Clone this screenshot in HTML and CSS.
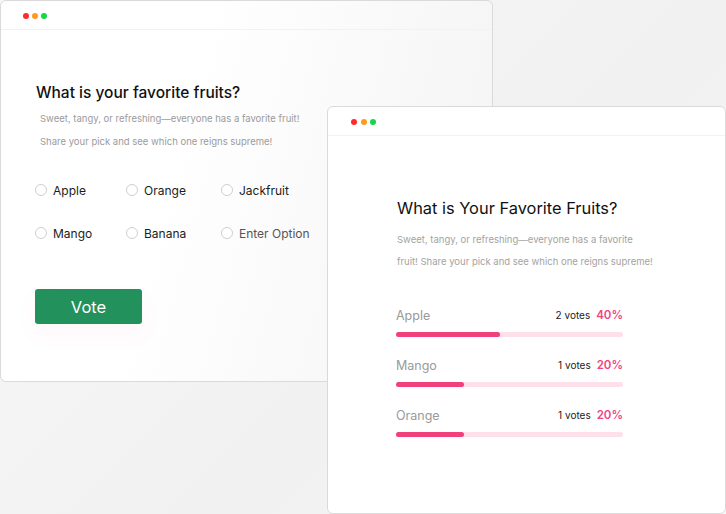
FILE: index.html
```html
<!DOCTYPE html>
<html lang="en">
<head>
    <meta charset="UTF-8">
    <meta name="viewport" content="width=device-width, initial-scale=1.0">
    <title>Fruit Poll</title>
    <link rel="stylesheet" href="styles.css">
</head>
<body>
    <div class="stage">
        <!-- Voting window -->
        <div class="window poll-window">
            <div class="window-bar">
                <span class="dot red"></span>
                <span class="dot orange"></span>
                <span class="dot green"></span>
            </div>
            <div class="poll-body">
                <h2 class="poll-title">What is your favorite fruits?</h2>
                <p class="poll-desc">Sweet, tangy, or refreshing—everyone has a favorite fruit!<br>Share your pick and see which one reigns supreme!</p>
                <div class="options">
                    <label class="option"><span class="radio"></span>Apple</label>
                    <label class="option"><span class="radio"></span>Orange</label>
                    <label class="option"><span class="radio"></span>Jackfruit</label>
                    <label class="option"><span class="radio"></span>Mango</label>
                    <label class="option"><span class="radio"></span>Banana</label>
                    <label class="option muted"><span class="radio"></span>Enter Option</label>
                </div>
                <button class="btn-vote">Vote</button>
            </div>
        </div>

        <!-- Results window -->
        <div class="window result-window">
            <div class="window-bar">
                <span class="dot red"></span>
                <span class="dot orange"></span>
                <span class="dot green"></span>
            </div>
            <div class="result-body">
                <h2 class="result-title">What is Your Favorite Fruits?</h2>
                <p class="result-desc">Sweet, tangy, or refreshing—everyone has a favorite<br>fruit! Share your pick and see which one reigns supreme!</p>
                <div class="results">
                    <div class="result">
                        <div class="result-head">
                            <span class="result-name">Apple</span>
                            <span class="votes">2 votes</span>
                            <span class="percent">40%</span>
                        </div>
                        <div class="track"><div class="fill" style="width: 46%"></div></div>
                    </div>
                    <div class="result">
                        <div class="result-head">
                            <span class="result-name">Mango</span>
                            <span class="votes">1 votes</span>
                            <span class="percent">20%</span>
                        </div>
                        <div class="track"><div class="fill" style="width: 30%"></div></div>
                    </div>
                    <div class="result">
                        <div class="result-head">
                            <span class="result-name">Orange</span>
                            <span class="votes">1 votes</span>
                            <span class="percent">20%</span>
                        </div>
                        <div class="track"><div class="fill" style="width: 30%"></div></div>
                    </div>
                </div>
            </div>
        </div>
    </div>
</body>
</html>
```

FILE: styles.css
```css
*{
    box-sizing: border-box;
}
body{
    margin: 0;
    width: 726px;
    height: 514px;
    overflow: hidden;
    font-family: Inter, "Liberation Sans", sans-serif;
    background: linear-gradient(135deg, #f7f7f7 0%, #f1f1f1 60%, #f7f7f7 100%);
}
.stage{
    position: relative;
    width: 726px;
    height: 514px;
}
.window{
    border: 1px solid #dadada;
    border-radius: 6px;
    background-color: #fff;
}
.window-bar{
    display: flex;
    align-items: center;
    gap: 3px;
    height: 29px;
    border-bottom: 1px solid #f2f2f2;
}
.dot{
    width: 6px;
    height: 6px;
    border-radius: 50%;
}
.red{ background-color: #ff2a2a; }
.orange{ background-color: #ff9a1f; }
.green{ background-color: #16d64a; }

/* left window */
.poll-window{
    width: 493px;
    height: 382px;
    background: linear-gradient(105deg, #ffffff 35%, #f3f3f3 100%);
}
.poll-window .window-bar{
    padding: 2px 0 0 22px;
}
.poll-body{
    padding: 53px 0 0 34px;
}
.poll-title{
    margin: 0 0 0 1px;
    font-size: 15.5px;
    line-height: 20px;
    font-weight: 500;
    color: #111;
}
.poll-desc{
    margin: 4px 0 0 5px;
    font-size: 9.5px;
    line-height: 23px;
    color: #9b9b9b;
}
.options{
    display: grid;
    grid-template-columns: 91px 95px auto;
    row-gap: 23px;
    margin-top: 27px;
}
.option{
    display: flex;
    align-items: center;
    gap: 6px;
    height: 20px;
    font-size: 12px;
    color: #1c1c1c;
}
.option.muted{
    color: #555;
}
.radio{
    width: 12px;
    height: 12px;
    border: 1px solid #cfcfcf;
    border-radius: 50%;
    background-color: #fff;
}
.btn-vote{
    display: block;
    margin-top: 46px;
    width: 107px;
    height: 35px;
    border: none;
    border-radius: 3px;
    background-color: #23915b;
    color: #fff;
    font-family: Inter, "Liberation Sans", sans-serif;
    font-size: 16.5px;
    box-shadow: 0 10px 22px rgba(240, 69, 127, 0.05);
}

/* right window, lies over the left one */
.result-window{
    position: absolute;
    left: 327px;
    top: 106px;
    width: 399px;
    height: 408px;
}
.result-window .window-bar{
    padding: 1px 0 0 23px;
    gap: 3.5px;
}
.result-body{
    padding: 61px 0 0 68px;
}
.result-title{
    margin: 0 0 0 1px;
    font-size: 16.4px;
    line-height: 22px;
    font-weight: 400;
    color: #111;
}
.result-desc{
    margin: 10px 0 0 1px;
    white-space: nowrap;
    font-size: 9.5px;
    line-height: 22px;
    color: #a3a3a3;
}
.results{
    display: flex;
    flex-direction: column;
    gap: 19px;
    margin-top: 33px;
    width: 227px;
}
.result-head{
    display: flex;
    align-items: center;
    height: 18px;
}
.result-name{
    flex: 1;
    font-size: 12.5px;
    color: #9a9a9a;
}
.votes{
    font-size: 10px;
    color: #222;
    margin-right: 6px;
}
.percent{
    font-size: 11.5px;
    font-weight: 600;
    color: #f0457f;
}
.track{
    margin-top: 8px;
    height: 5px;
    border-radius: 3px;
    background-color: #fde0ea;
}
.fill{
    height: 5px;
    border-radius: 3px;
    background-color: #f0417c;
}
```
